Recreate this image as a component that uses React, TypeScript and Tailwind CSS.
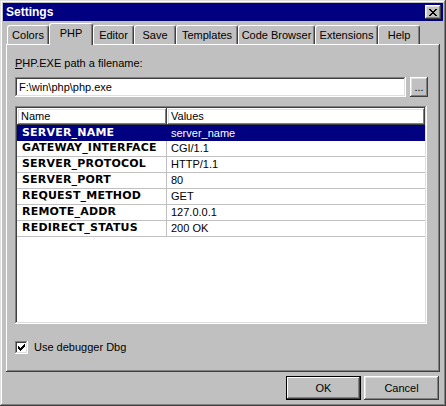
import React from "react"

const font = { fontFamily: '"Liberation Sans", Arial, sans-serif' }
const boldFont = { fontFamily: '"DejaVu Sans", "Liberation Sans", sans-serif' }

const tabs = [
  { label: "Colors", w: "w-[42px]" },
  { label: "PHP", w: "w-[44px]", active: true },
  { label: "Editor", w: "w-[41px]" },
  { label: "Save", w: "w-[42px]" },
  { label: "Templates", w: "w-[62px]" },
  { label: "Code Browser", w: "w-[77px]" },
  { label: "Extensions", w: "w-[63px]" },
  { label: "Help", w: "w-[42px]" },
]

const rows = [
  ["SERVER_NAME", "server_name"],
  ["GATEWAY_INTERFACE", "CGI/1.1"],
  ["SERVER_PROTOCOL", "HTTP/1.1"],
  ["SERVER_PORT", "80"],
  ["REQUEST_METHOD", "GET"],
  ["REMOTE_ADDR", "127.0.0.1"],
  ["REDIRECT_STATUS", "200 OK"],
]

const raised =
  "shadow-[inset_-1px_-1px_#404040,inset_1px_1px_#ffffff,inset_-2px_-2px_#808080,inset_2px_2px_#dfdfdf]"
const sunken =
  "shadow-[inset_-1px_-1px_#ffffff,inset_1px_1px_#808080,inset_-2px_-2px_#dfdfdf,inset_2px_2px_#404040]"

export default function App() {
  return (
    <div
      className="w-[446px] h-[406px] bg-[#c0c0c0] p-[3px] flex flex-col text-[11px] text-black shadow-[inset_-1px_-1px_#404040,inset_1px_1px_#dfdfdf,inset_-2px_-2px_#808080,inset_2px_2px_#ffffff]"
      style={font}
    >
      {/* Title bar */}
      <div className="h-[18px] bg-[#000080] flex items-center justify-between pl-[3px] pr-[2px]">
        <span className="text-white font-bold text-[12px] leading-none">Settings</span>
        <div className={`w-[16px] h-[14px] bg-[#c0c0c0] flex items-center justify-center ${raised}`}>
          <svg width="8" height="7" viewBox="0 0 8 7" shapeRendering="crispEdges">
            <path
              d="M0 0h2v1h-2zM6 0h2v1h-2zM1 1h2v1h-2zM5 1h2v1h-2zM2 2h4v1h-4zM3 3h2v1h-2zM2 4h4v1h-4zM1 5h2v1h-2zM5 5h2v1h-2zM0 6h2v1h-2zM6 6h2v1h-2z"
              fill="#000"
            />
          </svg>
        </div>
      </div>

      {/* Tabs */}
      <div className="h-[21px] mt-[2px] ml-[3px] flex items-end relative z-10">
        <div className="w-[1px]" />
        {tabs.map((t) => (
          <div
            key={t.label}
            className={`${t.w} ${
              t.active ? "h-[22px] -mb-px pb-[3px]" : "h-[19px]"
            } bg-[#c0c0c0] border-t border-l border-white border-r border-r-[#404040] rounded-t-[3px] shadow-[inset_-1px_0_#808080] flex items-center justify-center`}
          >
            <span className="leading-none">{t.label}</span>
          </div>
        ))}
      </div>

      {/* Panel */}
      <div
        className="ml-[3px] w-[434px] h-[328px] flex flex-col pl-[9px] pr-[10px] pt-[13px] shadow-[inset_-1px_-1px_#404040,inset_1px_1px_#ffffff,inset_-2px_-2px_#808080]"
      >
        <div className="h-[13px] leading-[13px]">
          <span className="underline">P</span>HP.EXE path a filename:
        </div>
        <div className="mt-[7px] flex gap-[4px]">
          <div className={`w-[391px] h-[20px] bg-white flex items-center pl-[4px] ${sunken}`}>
            F:\win\php\php.exe
          </div>
          <div className={`w-[18px] h-[20px] flex items-end justify-center pb-[4px] leading-none ${raised}`}>
            ...
          </div>
        </div>

        {/* List */}
        <div className={`mt-[9px] w-[412px] h-[218px] bg-white p-[2px] flex flex-col ${sunken}`}>
          <div className="flex h-[17px]">
            <div className={`w-[150px] flex items-center pl-[4px] ${raised}`}>Name</div>
            <div className={`flex-1 flex items-center pl-[4px] ${raised}`}>Values</div>
          </div>
          {rows.map(([name, value], i) => (
            <div
              key={name}
              className={`flex h-[16px] ${i === 0 ? "bg-[#000080] text-white" : "border-b border-[#c0c0c0]"}`}
            >
              <div
                className={`w-[150px] flex items-center pl-[5px] font-bold text-[11px] tracking-[0.2px] ${
                  i === 0 ? "" : "border-r border-[#c0c0c0]"
                }`}
                style={boldFont}
              >
                {name}
              </div>
              <div className="flex-1 flex items-center pl-[4px]">{value}</div>
            </div>
          ))}
        </div>

        {/* Checkbox */}
        <div className="mt-[17px] flex items-center gap-[6px] h-[13px]">
          <div className={`w-[13px] h-[13px] bg-white flex items-center justify-center ${sunken}`}>
            <svg width="7" height="7" viewBox="0 0 7 7" shapeRendering="crispEdges">
              <path d="M6 0h1v3h-1zM5 1h1v3h-1zM4 2h1v3h-1zM3 3h1v3h-1zM2 4h1v3h-1zM1 3h1v3h-1zM0 2h1v3h-1z" fill="#000" />
            </svg>
          </div>
          <span className="leading-none">Use debugger Dbg</span>
        </div>
      </div>

      {/* Buttons */}
      <div className="mt-[4px] flex justify-end gap-[3px] pr-[4px]">
        <div className="w-[75px] h-[24px] border border-black flex items-center justify-center shadow-[inset_-1px_-1px_#404040,inset_1px_1px_#ffffff,inset_-2px_-2px_#808080]">
          OK
        </div>
        <div className={`w-[75px] h-[24px] flex items-center justify-center ${raised}`}>Cancel</div>
      </div>
    </div>
  )
}
